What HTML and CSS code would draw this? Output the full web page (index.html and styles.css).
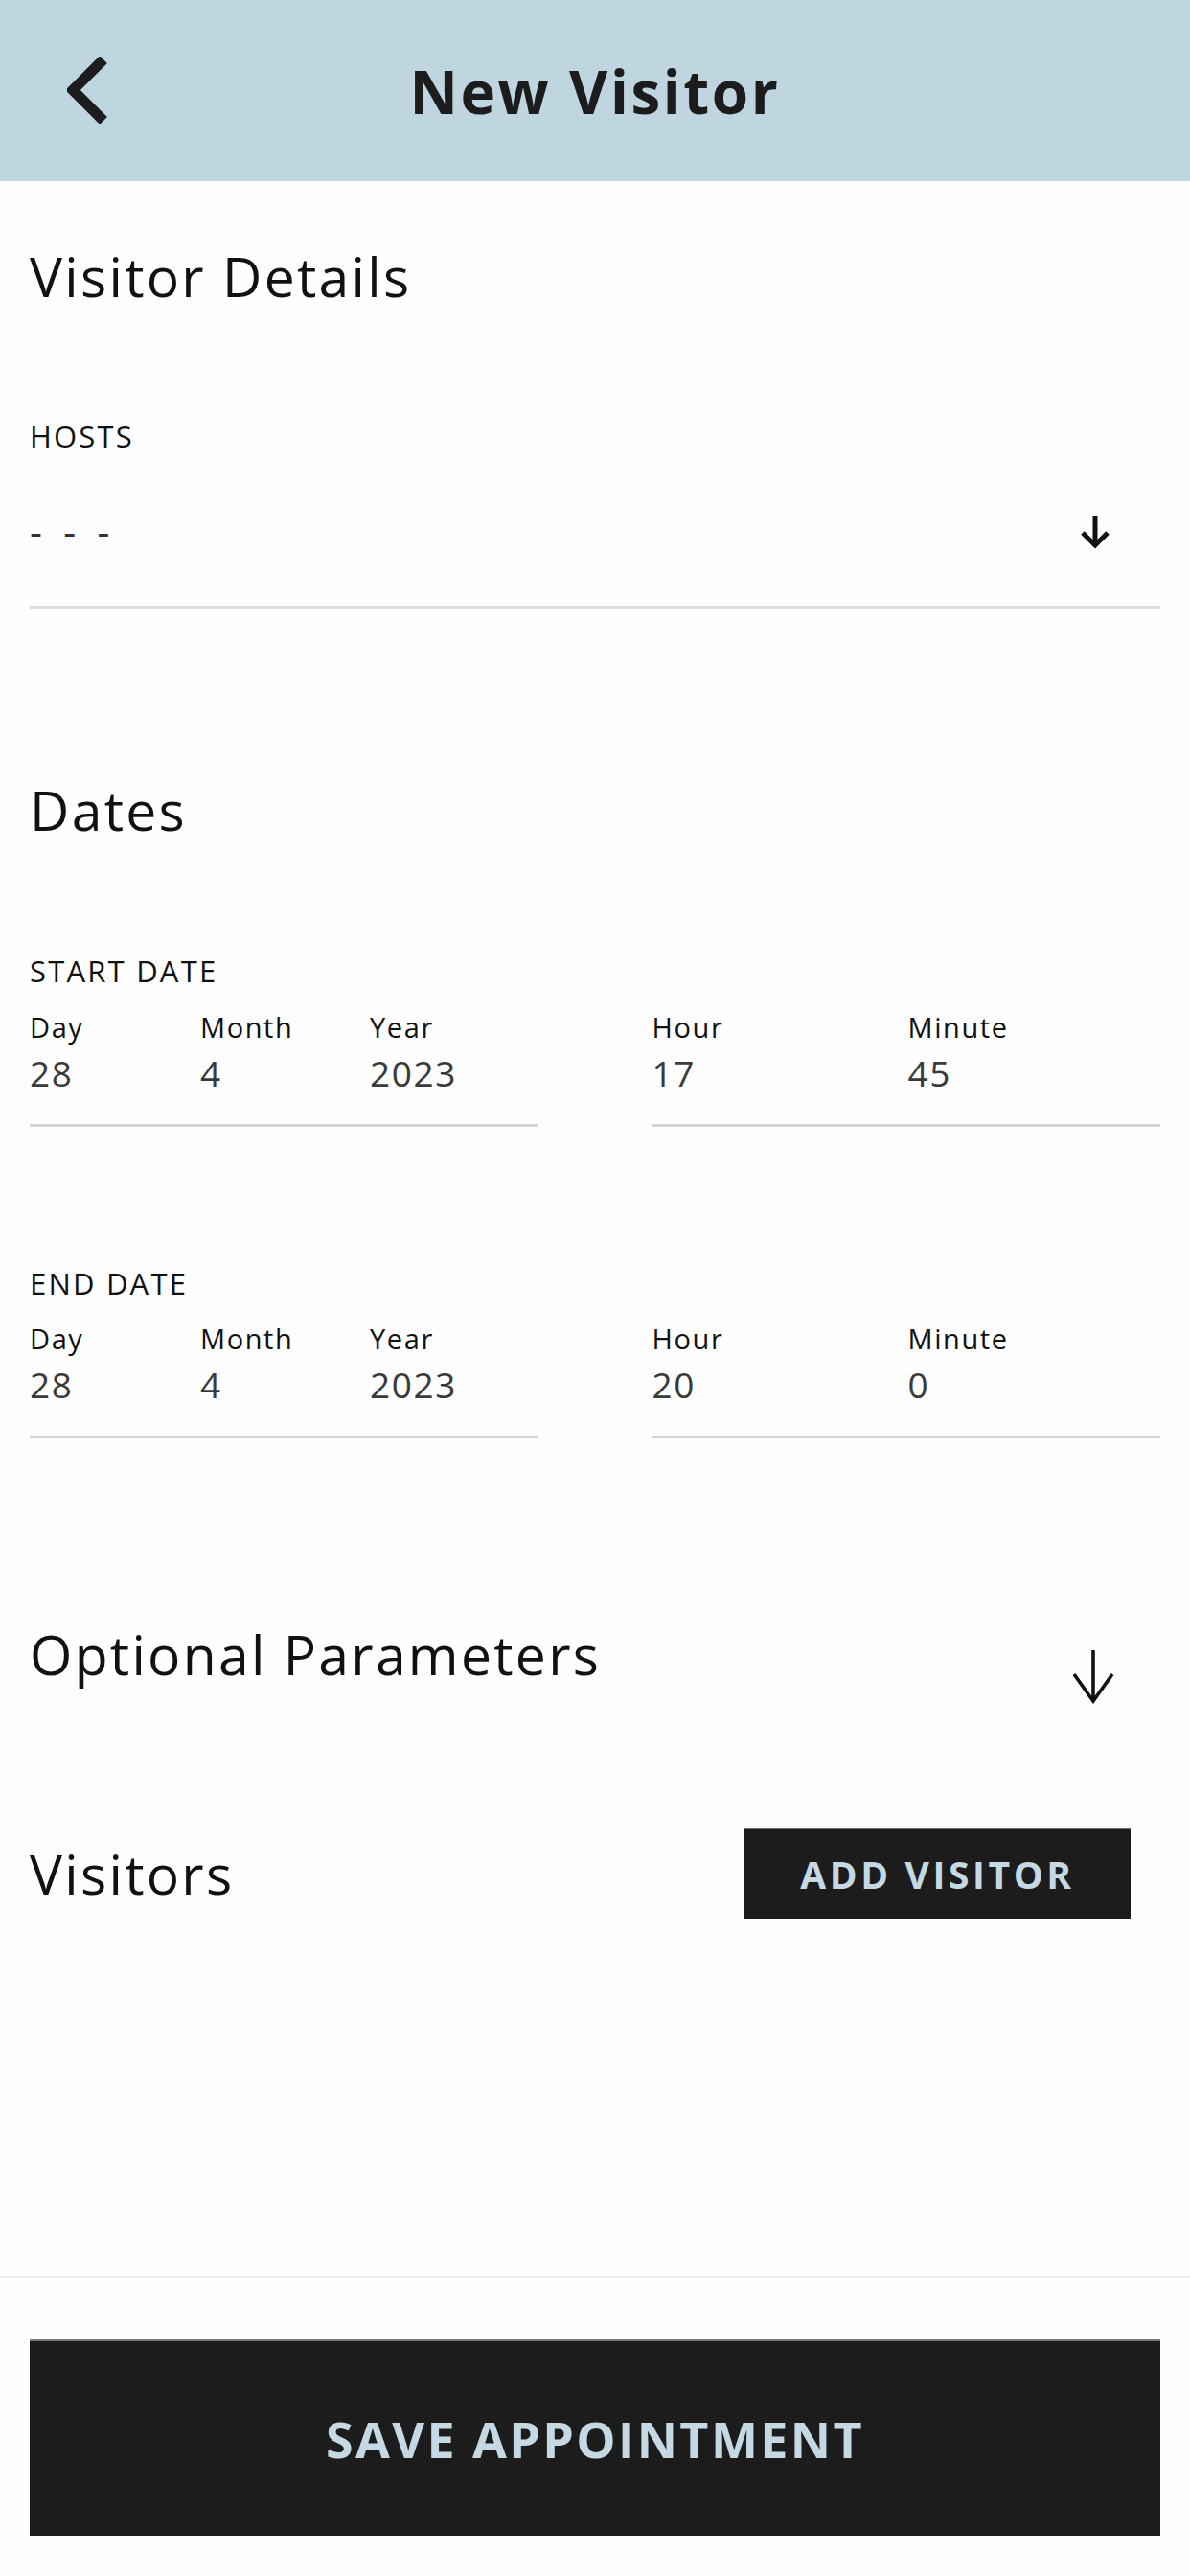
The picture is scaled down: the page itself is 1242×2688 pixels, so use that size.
FILE: index.html
```html
<!DOCTYPE html>
<html lang="en">
<head>
<meta charset="utf-8">
<title>New Visitor</title>
<link rel="stylesheet" href="styles.css">
</head>
<body>
<div class="page">
  <header class="topbar">
    <div class="back">
      <svg class="back-icon" width="44" height="70" viewBox="0 0 44 70"><path d="M38 3 L6 35 L38 67" fill="none" stroke="#1c1c1c" stroke-width="11" stroke-linejoin="miter"/></svg>
    </div>
    <h1 class="title">New Visitor</h1>
    <div class="spacer"></div>
  </header>

  <main class="content">
    <h2 class="section-title first">Visitor Details</h2>

    <div class="field-label hosts-label">HOSTS</div>
    <div class="select-row">
      <span class="placeholder">- - -</span>
      <svg class="arrow-bold" width="34" height="38" viewBox="0 0 34 38"><path d="M17 3 V35 M4 21 L17 34 L30 21" fill="none" stroke="#111" stroke-width="5"/></svg>
    </div>

    <h2 class="section-title dates-title">Dates</h2>

    <div class="field-label date-label start">START DATE</div>
    <div class="date-grid">
      <div class="group group-date">
        <div class="cell"><div class="sub">Day</div><div class="val">28</div></div>
        <div class="cell"><div class="sub">Month</div><div class="val">4</div></div>
        <div class="cell"><div class="sub">Year</div><div class="val">2023</div></div>
      </div>
      <div class="group group-time">
        <div class="cell"><div class="sub">Hour</div><div class="val">17</div></div>
        <div class="cell"><div class="sub">Minute</div><div class="val">45</div></div>
      </div>
    </div>

    <div class="field-label date-label end">END DATE</div>
    <div class="date-grid">
      <div class="group group-date">
        <div class="cell"><div class="sub">Day</div><div class="val">28</div></div>
        <div class="cell"><div class="sub">Month</div><div class="val">4</div></div>
        <div class="cell"><div class="sub">Year</div><div class="val">2023</div></div>
      </div>
      <div class="group group-time">
        <div class="cell"><div class="sub">Hour</div><div class="val">20</div></div>
        <div class="cell"><div class="sub">Minute</div><div class="val">0</div></div>
      </div>
    </div>

    <div class="optional-row">
      <h2 class="section-title">Optional Parameters</h2>
      <svg class="arrow-thin" width="46" height="58" viewBox="0 0 46 58"><path d="M23 2 V56 M3 27 L23 55 L43 27" fill="none" stroke="#111" stroke-width="3.6"/></svg>
    </div>

    <div class="visitors-row">
      <h2 class="section-title">Visitors</h2>
      <button class="add-btn">ADD VISITOR</button>
    </div>
  </main>

  <footer class="footer">
    <button class="save-btn">SAVE APPOINTMENT</button>
  </footer>
</div>
</body>
</html>
```

FILE: styles.css
```css
* { box-sizing: border-box; }
html, body { margin: 0; padding: 0; }
body {
  background: #fefefe;
  font-family: "Open Sans", "Noto Sans", "DejaVu Sans", sans-serif;
  color: #111;
}
.page {
  width: 1242px;
  min-height: 2688px;
  display: flex;
  flex-direction: column;
}
.topbar {
  height: 189px;
  background: #bfd5e0;
  display: grid;
  grid-template-columns: 1fr auto 1fr;
  align-items: center;
}
.back {
  padding-left: 70px;
  display: flex;
  align-items: center;
  height: 100%;
}
.back-icon { display: block; margin-top: -1px; }
.title {
  margin: 0;
  font-size: 62px;
  font-weight: 700;
  line-height: 80px;
  color: #1c1c1c;
  letter-spacing: 2.6px;
}
.content {
  padding: 59px 31px 0 31px;
  display: flex;
  flex-direction: column;
}
.section-title {
  margin: 0;
  font-size: 57px;
  font-weight: 400;
  line-height: 80px;
  color: #111;
  letter-spacing: 2.3px;
}
.field-label {
  font-size: 31px;
  line-height: 40px;
  color: #111;
  letter-spacing: 2.2px;
}
.hosts-label { margin-top: 107px; }
.select-row {
  height: 160px;
  border-bottom: 3px solid #dcdcde;
  display: flex;
  align-items: center;
  justify-content: space-between;
  padding-right: 51px;
}
.placeholder {
  font-size: 40px;
  font-weight: 500;
  letter-spacing: 6px;
  color: #333;
  line-height: 44px;
}
.arrow-bold { display: block; }
.dates-title { margin-top: 170px; }
.date-label.start { margin-top: 108px; }
.date-label.end { margin-top: 143px; }
.date-grid {
  margin-top: 22px;
  display: grid;
  grid-template-columns: 1fr 1fr;
  column-gap: 119px;
}
.date-label.end + .date-grid { margin-top: 21px; }
.group {
  display: grid;
  border-bottom: 3px solid #d4d4d6;
  padding-bottom: 31px;
}
.group-date { grid-template-columns: 178px 177px 1fr; }
.group-time { grid-template-columns: 267px 1fr; }
.sub {
  font-size: 29px;
  line-height: 34px;
  color: #111;
  letter-spacing: 1.6px;
}
.val {
  margin-top: 9px;
  font-size: 37px;
  line-height: 44px;
  color: #3a3a3a;
  letter-spacing: 1.6px;
}
.optional-row {
  margin-top: 185px;
  display: flex;
  justify-content: space-between;
  align-items: flex-start;
  padding-right: 47px;
}
.arrow-thin { display: block; margin-top: 34px; }
.visitors-row {
  margin-top: 129px;
  height: 95px;
  display: flex;
  align-items: center;
  justify-content: space-between;
  padding-right: 31px;
}
.add-btn {
  width: 403px;
  height: 95px;
  border: none;
  background: #1c1c1c;
  color: #c4d9e4;
  font-family: "Open Sans", "Noto Sans", sans-serif;
  font-size: 39px;
  font-weight: 700;
  letter-spacing: 3.6px;
  padding: 0;
  border-top: 2px solid #6a6a6a;
}
.footer {
  margin-top: auto;
  border-top: 2px solid #efeff1;
  padding: 64px 31px 42px 31px;
}
.save-btn {
  display: block;
  width: 100%;
  height: 205px;
  border: none;
  border-top: 2px solid #7a7a7a;
  background: #1c1c1c;
  color: #c4d9e4;
  font-family: "Open Sans", "Noto Sans", sans-serif;
  font-size: 52px;
  font-weight: 700;
  letter-spacing: 2.4px;
  padding: 0;
}
```
